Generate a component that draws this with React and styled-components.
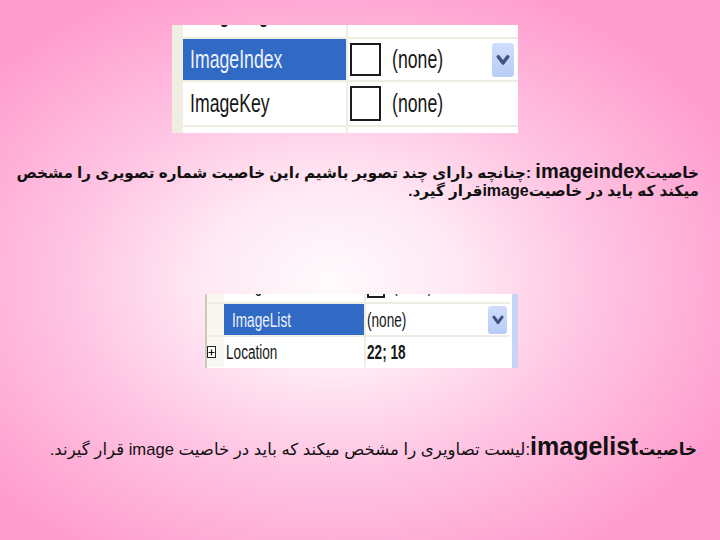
import React from "react";
import styled, { createGlobalStyle } from "styled-components";

const Global = createGlobalStyle`
  html, body { margin:0; padding:0; }
  #root { width:720px; height:540px; }
`;

const Page = styled.div`
  width:720px;
  height:540px;
  overflow:hidden;
  display:flex;
  flex-direction:column;
  padding-top:25px;
  box-sizing:border-box;
  background: radial-gradient(ellipse 62% 60% at 46% 52%, #fffafd 0%, #ffe9f4 28%, #ffc3e2 60%, #ff9ccd 100%);
  font-family:"Liberation Sans", "DejaVu Sans", Arial, sans-serif;
`;

const Grid = styled.div`
  margin-left:${p => p.$left}px;
  margin-top:${p => p.$top || 0}px;
  width:${p => p.$width}px;
  height:${p => p.$height}px;
  background:#fff;
  display:flex;
  overflow:hidden;
  flex-shrink:0;
  box-sizing:border-box;
  border-left:${p => p.$edge};
`;

const Rows = styled.div`
  flex:1;
  display:flex;
  flex-direction:column;
`;

const Row = styled.div`
  display:flex;
  height:${p => p.$h}px;
  flex-shrink:0;
  overflow:hidden;
  border-bottom:${p => (p.$sep ?? 2)}px solid #efede2;
`;

const Gutter = styled.div`
  width:${p => p.$w}px;
  flex-shrink:0;
  background:#f8f7f1;
  display:flex;
  align-items:center;
`;

const NameCell = styled.div`
  width:${p => p.$w}px;
  flex-shrink:0;
  box-sizing:border-box;
  padding-left:${p => p.$pad}px;
  background:${p => (p.$selected ? "#316ac5" : "#fff")};
  color:${p => (p.$selected ? "#eef2ff" : "#161616")};
  border-right:2px solid #efede2;
  display:flex;
  align-items:${p => (p.$top ? "flex-start" : "center")};
  overflow:hidden;
`;

const ValueCell = styled.div`
  flex:1;
  display:flex;
  align-items:${p => (p.$top ? "flex-start" : "center")};
  padding-left:${p => p.$pad}px;
  padding-right:${p => p.$right || 0}px;
  color:#161616;
  overflow:hidden;
`;

const Label = styled.span`
  display:inline-block;
  font-family:"Liberation Sans", Tahoma, sans-serif;
  font-size:${p => p.$size}px;
  line-height:${p => p.$size * 1.2}px;
  font-weight:${p => (p.$bold ? 700 : 400)};
  white-space:nowrap;
  transform:scaleX(0.68);
  transform-origin:left center;
  margin-top:${p => p.$shift || 0}px;
`;

const Check = styled.span`
  display:inline-block;
  flex-shrink:0;
  width:${p => p.$w}px;
  height:${p => p.$h}px;
  box-sizing:border-box;
  border:2px solid #1c1c1c;
  background:#fff;
  margin-right:${p => p.$gap}px;
  margin-top:${p => p.$shift || 0}px;
`;

const Drop = styled.span`
  margin-left:auto;
  width:${p => p.$w}px;
  height:${p => p.$h}px;
  border-radius:3px;
  background:linear-gradient(180deg, #d0defc 0%, #b8ccf6 100%);
  display:flex;
  align-items:center;
  justify-content:center;
  flex-shrink:0;
`;

const Plus = styled.span`
  width:9px;
  height:12px;
  box-sizing:border-box;
  border:1px solid #222;
  background:#fff;
  display:flex;
  align-items:center;
  justify-content:center;
`;

const Scroll = styled.div`
  width:6px;
  margin-left:2px;
  background:#c6d5f6;
  flex-shrink:0;
`;

const Para = styled.p`
  margin:${p => p.$top}px 0 0 0;
  padding:0 ${p => p.$right}px 0 ${p => p.$left}px;
  direction:rtl;
  text-align:right;
  color:#111;
  font-size:${p => p.$size}px;
  line-height:${p => p.$lh}px;
  font-weight:${p => (p.$bold ? 700 : 400)};
`;

const Strong = styled.span`
  font-weight:700;
`;

const Latin = styled.span`
  font-family:"Liberation Sans", Arial, sans-serif;
  font-weight:700;
  font-size:${p => p.$size}px;
`;

const Chevron = ({ w = 12 }) => (
  <svg width={w} height={w} viewBox="0 0 12 12">
    <path d="M2 3.2 L6 8.6 L10 3.2" fill="none" stroke="#3f5281" strokeWidth="3" strokeLinecap="round" strokeLinejoin="round" />
  </svg>
);

const PlusGlyph = () => (
  <svg width="7" height="7" viewBox="0 0 7 7">
    <path d="M3.5 0.5 V6.5 M0.5 3.5 H6.5" stroke="#111" strokeWidth="1.2" />
  </svg>
);

export default function App() {
  return (
    <Page>
      <Global />

      <Grid $left={172} $width={346} $height={108} $edge="11px solid #f0eee3">
        <Rows>
          <Row $h={12}>
            <NameCell $w={165} $pad={7} $top>
              <Label $size={26} $shift={-27}>ImageAlign</Label>
            </NameCell>
            <ValueCell $pad={2} />
          </Row>
          <Row $h={41}>
            <NameCell $w={165} $pad={7} $selected>
              <Label $size={26}>ImageIndex</Label>
            </NameCell>
            <ValueCell $pad={2} $right={4}>
              <Check $w={31} $h={33} $gap={11} />
              <Label $size={26}>(none)</Label>
              <Drop $w={22} $h={34}><Chevron w={14} /></Drop>
            </ValueCell>
          </Row>
          <Row $h={43}>
            <NameCell $w={165} $pad={7}>
              <Label $size={26}>ImageKey</Label>
            </NameCell>
            <ValueCell $pad={2}>
              <Check $w={31} $h={35} $gap={11} />
              <Label $size={26}>(none)</Label>
            </ValueCell>
          </Row>
          <Row $h={6} $sep={0}>
            <NameCell $w={165} $pad={7} />
            <ValueCell $pad={2} />
          </Row>
        </Rows>
      </Grid>

      <Para $top={29} $right={21} $left={8} $size={15.2} $lh={18} $bold>
        <Strong>خاصیت</Strong><Latin $size={20}>imageindex</Latin> :چنانچه دارای چند تصویر باشیم ،این خاصیت شماره تصویری را مشخص
        <br />
        میکند که باید در خاصیت<Latin $size={16}>image</Latin>قرار گیرد.
      </Para>

      <Grid $left={205} $top={94} $width={313} $height={74} $edge="2px solid #cdc9b7">
        <Rows>
          <Row $h={8}>
            <Gutter $w={17} />
            <NameCell $w={142} $pad={8} $top>
              <Label $size={20} $shift={-21}>ImageIndex</Label>
            </NameCell>
            <ValueCell $pad={1} $top>
              <Check $w={18} $h={20} $gap={8} $shift={-16} />
              <Label $size={20} $shift={-21}>(none)</Label>
            </ValueCell>
          </Row>
          <Row $h={31}>
            <Gutter $w={17} />
            <NameCell $w={142} $pad={8} $selected>
              <Label $size={20}>ImageList</Label>
            </NameCell>
            <ValueCell $pad={1} $right={3}>
              <Label $size={20}>(none)</Label>
              <Drop $w={19} $h={28}><Chevron w={12} /></Drop>
            </ValueCell>
          </Row>
          <Row $h={30} $sep={0}>
            <Gutter $w={17}>
              <Plus><PlusGlyph /></Plus>
            </Gutter>
            <NameCell $w={142} $pad={2}>
              <Label $size={20}>Location</Label>
            </NameCell>
            <ValueCell $pad={1}>
              <Label $size={20} $bold>22; 18</Label>
            </ValueCell>
          </Row>
        </Rows>
        <Scroll />
      </Grid>

      <Para $top={66} $right={23} $left={8} $size={16.6} $lh={24}>
        <Strong>خاصیت</Strong><Latin $size={25}>imagelist</Latin>:لیست تصاویری را مشخص میکند که باید در خاصیت image قرار گیرند.
      </Para>
    </Page>
  );
}
